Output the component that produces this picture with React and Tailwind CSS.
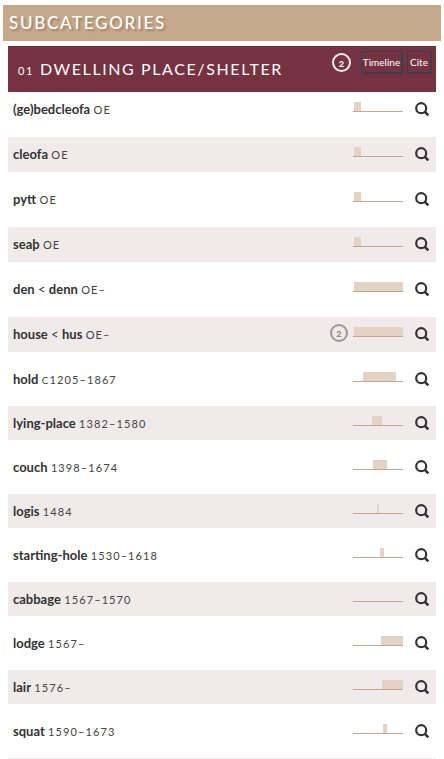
const ENTRIES = [
  { word: "(ge)bedcleofa", dates: "OE", start: 1, end: 8 },
  { word: "cleofa", dates: "OE", start: 1, end: 8 },
  { word: "pytt", dates: "OE", start: 1, end: 8 },
  { word: "seaþ", dates: "OE", start: 1, end: 8 },
  { word: "den", origin: "denn", dates: "OE–", start: 1, end: 50 },
  { word: "house", origin: "hus", dates: "OE–", start: 1, end: 50, count: 2 },
  { word: "hold", circa: true, dates: "1205–1867", start: 10, end: 43 },
  { word: "lying-place", dates: "1382–1580", start: 19, end: 29 },
  { word: "couch", dates: "1398–1674", start: 20, end: 34 },
  { word: "logis", dates: "1484", start: 24, end: 26 },
  { word: "starting-hole", dates: "1530–1618", start: 27, end: 31 },
  { word: "cabbage", dates: "1567–1570", start: 27, end: 27 },
  { word: "lodge", dates: "1567–", start: 28, end: 50 },
  { word: "lair", dates: "1576–", start: 29, end: 50 },
  { word: "squat", dates: "1590–1673", start: 30, end: 34 },
];

function SearchIcon() {
  return (
    <svg viewBox="0 0 14 14" className="size-3.5" fill="none" stroke="currentColor" aria-hidden="true">
      <circle cx="6.2" cy="6.2" r="5" strokeWidth="2.2" />
      <path d="M9.6 9.6 L13.4 13.4" strokeWidth="2.6" />
    </svg>
  );
}

function Span({ start, end }) {
  return (
    <svg viewBox="0 0 50 10" className="h-2.5 w-[50px]" shapeRendering="crispEdges" aria-hidden="true">
      <rect x={start} y="0" width={end - start} height="9" fill="#e3d3c4" />
      <rect x="0" y="9" width="50" height="1" fill="#c5a88c" />
    </svg>
  );
}

function Entry({ entry }) {
  return (
    <li
      className={
        "mb-2.5 flex items-start pr-[7px] pl-[5px] even:bg-[#f0eaea] " +
        (entry.start > 1 ? "h-[34px]" : "h-[35px]")
      }
    >
      <p className="min-w-0 flex-1 pt-[7px] text-[13px] leading-5">
        <b>{entry.word}</b>
        {entry.origin && (
          <>
            {" < "}
            <b>{entry.origin}</b>
          </>
        )}{" "}
        <span className="text-[11px] tracking-widest text-[#444]">
          {entry.circa && <span className="text-[10px]">C</span>}
          {entry.dates}
        </span>
      </p>
      {entry.count && (
        <a
          href="#categories"
          className="mt-[7px] mr-[5px] flex size-[18px] items-center justify-center rounded-full border-2 border-[#999] text-[10px] leading-3 font-bold text-[#888] oldstyle-nums"
        >
          {entry.count}
        </a>
      )}
      <div className="mt-2.5 mr-3">
        <Span start={entry.start} end={entry.end} />
      </div>
      <button type="button" aria-label="Search" className="mt-2.5">
        <SearchIcon />
      </button>
    </li>
  );
}

export default function App() {
  return (
    <main className="bg-white px-[3px] pt-[5px] font-['Lato','Noto_Sans',sans-serif] text-[#333]">
      <h1 className="bg-[#c6a98b] px-1.5 py-1.5 text-[17px] leading-6 font-medium tracking-widest text-white [text-shadow:2px_2px_2px_rgba(90,60,40,0.35)]">
        SUBCATEGORIES
      </h1>
      <section className="mx-[5px] mt-[5px]">
        <header className="flex h-[46px] items-start bg-[#763240] pr-[5px] pl-2.5 text-white">
          <h2 className="flex flex-1 items-baseline gap-1.5 pt-[11px] text-base leading-6 tracking-widest whitespace-nowrap">
            <span className="text-[11px]">01</span>
            <span>DWELLING PLACE/SHELTER</span>
          </h2>
          <a
            href="#categories"
            className="mt-[7px] mr-2.5 flex size-[19px] items-center justify-center rounded-full border-2 border-[#f4eced] text-[10px] leading-3 font-bold oldstyle-nums"
          >
            2
          </a>
          <button
            type="button"
            className="mt-[5px] mr-[5px] h-[22px] w-[41px] border border-[#2f4350] text-[10px] leading-5 shadow-[1px_1px_1px_#4a3a46]"
          >
            Timeline
          </button>
          <button
            type="button"
            className="mt-[5px] h-[22px] w-6 border border-[#2f4350] text-[10px] leading-5 shadow-[1px_1px_1px_#4a3a46]"
          >
            Cite
          </button>
        </header>
        <ul>
          {ENTRIES.map((entry) => (
            <Entry key={entry.word} entry={entry} />
          ))}
        </ul>
        <hr className="border-[#f0eaea]" />
      </section>
    </main>
  );
}
